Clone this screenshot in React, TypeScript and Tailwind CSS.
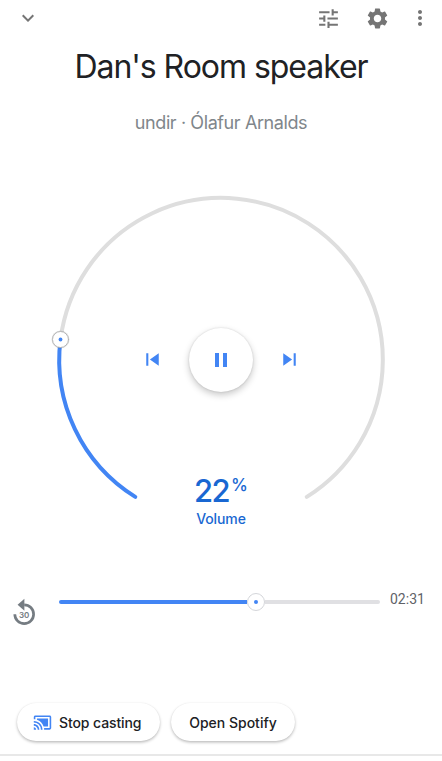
import React from "react";
import { MdCastConnected, MdExpandMore, MdMoreVert, MdPause, MdSettings, MdSkipNext, MdSkipPrevious, MdTune } from "react-icons/md";

const buttonShadow = "shadow-[0_1.5px_3px_rgba(0,0,0,0.26),0_0_1px_rgba(0,0,0,0.08)]";

function VolumeArc() {
  return (
    <svg className="col-start-1 row-start-1 h-[340px] w-[340px]" viewBox="51 190 340 340" fill="none" strokeLinecap="round">
      <path d="M60.5 339.5A161.8 161.8 0 1 1 306.8 496.9" stroke="#dedede" strokeWidth="4" />
      <path d="M60.5 339.5A161.8 161.8 0 0 0 135.3 496.9" stroke="#4285f4" strokeWidth="4" />
      <circle cx="60.5" cy="339.5" r="9" fill="#000" fillOpacity="0.12" />
      <circle cx="60.5" cy="339.5" r="8" fill="#fff" stroke="#b0b0b0" strokeWidth="0.9" />
      <circle cx="60.5" cy="339.5" r="1.9" fill="#4285f4" />
    </svg>
  );
}

function ReplayIcon() {
  return (
    <svg className="h-8 w-8" viewBox="0 0 32 32" fill="none">
      <path d="M16.2 7.8A9.4 9.4 0 1 1 6.8 17.2" stroke="#757c82" strokeWidth="2.7" />
      <path d="M16.4 1.8v12L9.6 7.8z" fill="#757c82" />
      <text x="16.2" y="21.2" textAnchor="middle" fill="#757c82" fontSize="8" fontWeight="600" fontFamily="Inter, sans-serif">30</text>
    </svg>
  );
}

export default function App() {
  return (
    <main className="flex h-[761px] w-[442px] flex-col overflow-hidden bg-white font-['Inter',sans-serif] text-[#202124]">
      <header className="flex h-9 shrink-0 items-center pl-4 pr-[10px] text-[#757575]">
        <button aria-label="Collapse"><MdExpandMore size={24} /></button>
        <div className="ml-auto flex h-[25px] items-start">
          <button className="mr-6" aria-label="Equalizer"><MdTune size={25} /></button>
          <button className="mr-[18px]" aria-label="Settings"><MdSettings size={25} /></button>
          <button aria-label="More"><MdMoreVert size={24} /></button>
        </div>
      </header>
      <h1 className="mt-[11px] h-10 whitespace-nowrap text-center text-[32px] leading-10 tracking-[-1.05px]">Dan's Room speaker</h1>
      <p className="mt-6 h-6 whitespace-nowrap text-center text-[18px] leading-6 tracking-[-0.4px] text-[#80868b]">undir · Ólafur Arnalds</p>

      <section className="mt-[55px] grid h-[340px] shrink-0 grid-cols-[340px] grid-rows-[340px] justify-center">
        <VolumeArc />
        <div className="col-start-1 row-start-1 flex flex-col items-center">
          <div className="mt-[137px] flex h-[65px] items-center text-[#4285f4]">
            <button aria-label="Previous"><MdSkipPrevious size={25} /></button>
            <button aria-label="Pause" className="mx-6 flex h-16 w-16 items-center justify-center rounded-full bg-white shadow-[0_3px_7px_rgba(0,0,0,0.22),0_0_2px_rgba(0,0,0,0.14)]"><MdPause size={24} /></button>
            <button aria-label="Next"><MdSkipNext size={25} /></button>
          </div>
          <div className="mt-[81px] flex h-9 items-start text-[#1967d2]">
            <span className="text-[31px] font-medium leading-9 tracking-[-1.6px]">22</span>
            <span className="ml-[2px] text-[17px] font-medium leading-6">%</span>
          </div>
          <span className="text-[14px] font-medium leading-5 tracking-[-0.1px] text-[#1967d2]">Volume</span>
        </div>
      </section>

      <section className="mt-[57px] flex h-[48px] shrink-0 items-start">
        <button aria-label="Replay 30 seconds" className="ml-2 mt-[10px]"><ReplayIcon /></button>
        <div className="ml-[19px] mt-[6px] flex h-[18px] w-[321px] items-center">
          <div className="h-1 w-[188px] rounded-l-full bg-[#4285f4]" />
          <div className="flex h-[18px] w-[18px] items-center justify-center rounded-full border-[1.5px] border-[#d4d6da] bg-white">
            <div className="h-1 w-1 rounded-full bg-[#4285f4]" />
          </div>
          <div className="h-1 flex-1 rounded-r-full bg-[#e0e0e3]" />
        </div>
        <time className="ml-[10px] mt-[2px] font-['Roboto',sans-serif] text-[14px] leading-5 text-[#5f6368]">02:31</time>
      </section>

      <footer className="mt-auto flex h-[59px] shrink-0 items-start gap-[11px] border-b-2 border-[#e8e8e8] pl-[17px] pt-[6px] mb-[5px] text-[14px] font-medium">
        <button className={`flex h-[38px] w-[143px] items-center whitespace-nowrap rounded-full bg-white pl-4 ${buttonShadow}`}>
          <MdCastConnected className="text-[#4285f4]" size={19} />
          <span className="ml-[7px] tracking-[-0.1px]">Stop casting</span>
        </button>
        <button className={`flex h-[38px] w-[124px] items-center justify-center whitespace-nowrap rounded-full bg-white ${buttonShadow}`}>Open Spotify</button>
      </footer>
    </main>
  );
}
